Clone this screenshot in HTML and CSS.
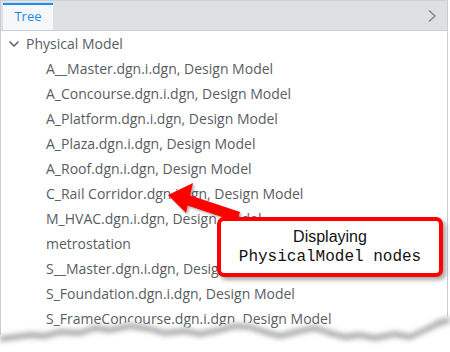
FILE: index.html
```html
<!DOCTYPE html>
<html>
<head>
<meta charset="utf-8">
<link rel="stylesheet" href="styles.css">
</head>
<body>
<div class="panel">
  <div class="tabbar">
    <div class="tab"><span class="tab-label">Tree</span></div>
    <div class="spacer"></div>
    <svg class="next" width="10" height="14" viewBox="0 0 10 14"><path d="M2 1.5 L8 7 L2 12.5" fill="none" stroke="#7a8591" stroke-width="1.4"/></svg>
  </div>
  <div class="tree">
    <div class="row root">
      <svg class="caret" width="12" height="12" viewBox="0 0 12 12"><path d="M1.5 3.5 L6 8 L10.5 3.5" fill="none" stroke="#555" stroke-width="1.3"/></svg>
      <span>Physical Model</span>
    </div>
    <div class="row child">A__Master.dgn.i.dgn, Design Model</div>
    <div class="row child">A_Concourse.dgn.i.dgn, Design Model</div>
    <div class="row child">A_Platform.dgn.i.dgn, Design Model</div>
    <div class="row child">A_Plaza.dgn.i.dgn, Design Model</div>
    <div class="row child">A_Roof.dgn.i.dgn, Design Model</div>
    <div class="row child">C_Rail Corridor.dgn.i.dgn, Design Model</div>
    <div class="row child">M_HVAC.dgn.i.dgn, Design Model</div>
    <div class="row child">metrostation</div>
    <div class="row child">S__Master.dgn.i.dgn, Design Model</div>
    <div class="row child">S_Foundation.dgn.i.dgn, Design Model</div>
    <div class="row child">S_FrameConcourse.dgn.i.dgn, Design Model</div>
  </div>
</div>

<svg class="arrow" width="450" height="352" viewBox="0 0 450 352">
  <defs>
    <filter id="ash" x="-20%" y="-20%" width="140%" height="140%">
      <feDropShadow dx="1.5" dy="1.5" stdDeviation="1" flood-color="#000" flood-opacity="0.35"/>
    </filter>
  </defs>
  <g filter="url(#ash)" fill="#f00">
    <polygon points="186,194 240,212 237,222 183,204"/>
    <polygon points="168,195 193,183 186,213"/>
  </g>
</svg>

<div class="callout">
  <div class="line1">Displaying</div>
  <div class="line2"><span class="mono">PhysicalModel</span> nodes</div>
</div>

<svg class="tear" width="450" height="60" viewBox="0 292 450 60">
  <defs>
    <filter id="blur" x="-5%" y="-50%" width="110%" height="200%">
      <feGaussianBlur stdDeviation="2.5"/>
    </filter>
  </defs>
  <path d="M0 335 L15 333 L30 331 L45 332 L60 328 L80 329 L95 324 L110 326 L130 322 L150 325 L165 329 L185 327 L200 330 L220 326 L235 322 L250 323 L265 328 L280 332 L300 327 L315 324 L330 329 L345 333 L360 331 L375 334 L395 330 L410 333 L425 326 L440 318 L450 316 L450 352 L0 352 Z" fill="#fff"/>
  <path d="M0 336 L15 334 L30 332 L45 333 L60 329 L80 330 L95 325 L110 327 L130 323 L150 326 L165 330 L185 328 L200 331 L220 327 L235 323 L250 324 L265 329 L280 333 L300 328 L315 325 L330 330 L345 334 L360 332 L375 335 L395 331 L410 334 L425 327 L440 319 L450 317 L450 323 L440 326 L425 333 L410 340 L395 337 L375 341 L360 338 L345 340 L330 336 L315 331 L300 334 L280 339 L265 335 L250 330 L235 329 L220 333 L200 337 L185 334 L165 336 L150 332 L130 329 L110 333 L95 331 L80 336 L60 335 L45 339 L30 338 L15 340 L0 342 Z" fill="#9a9a9a" opacity="0.8" filter="url(#blur)"/>
</svg>
</body>
</html>
```
FILE: styles.css
```css
html, body {
  margin: 0;
  padding: 0;
  background: #fff;
  width: 450px;
  height: 352px;
  overflow: hidden;
  position: relative;
}
.panel {
  width: 446px;
  height: 352px;
  border-left: 1px solid #c9ced3;
  border-right: 1px solid #c9ced3;
  box-sizing: content-box;
  font-family: "Open Sans", sans-serif;
}
.tabbar {
  background: #dee1e4;
  border-top: 1px solid #cdd1d5;
  border-bottom: 1px solid #cdd1d5;
  display: flex;
  align-items: stretch;
  box-sizing: border-box;
  height: 31px;
}
.tab {
  width: 50px;
  margin-left: 2px;
  margin-top: 2px;
  background: #f6f7f8;
  border-top: 2px solid #1f8ded;
  display: flex;
  justify-content: center;
  padding-top: 2px;
  box-sizing: border-box;
}
.tab-label {
  color: #1a8ae8;
  font-size: 13px;
  line-height: 18px;
}
.spacer { flex: 1; }
.next {
  align-self: center;
  margin-right: 10px;
}
.row {
  height: 25px;
  line-height: 25px;
  font-size: 14px;
  color: #585d62;
  white-space: nowrap;
}
.root {
  display: flex;
  align-items: center;
  padding-left: 7px;
  gap: 6px;
}
.child {
  padding-left: 45px;
}
.arrow {
  position: absolute;
  left: 0;
  top: 0;
}
.callout {
  position: absolute;
  left: 217px;
  top: 217px;
  width: 226px;
  height: 60px;
  box-sizing: border-box;
  border: 4px solid #f00;
  border-radius: 7px;
  background: #fff;
  box-shadow: 3px 3px 4px rgba(0,0,0,0.35);
  display: flex;
  flex-direction: column;
  align-items: center;
  justify-content: center;
  color: #111;
  font-family: "Liberation Sans", Arial, sans-serif;
  font-size: 16px;
  line-height: 20px;
}
.line2 {
  font-family: "Liberation Mono", "DejaVu Sans Mono", monospace;
}
.tear {
  position: absolute;
  left: 0;
  top: 292px;
}
```
